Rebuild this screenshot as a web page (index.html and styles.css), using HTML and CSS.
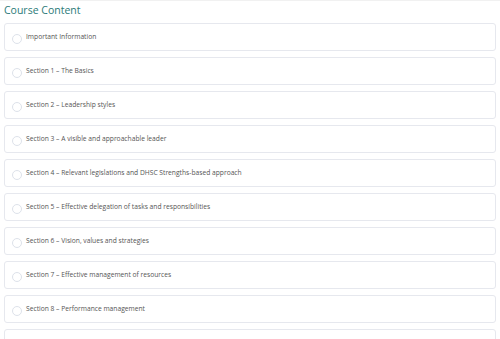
FILE: index.html
```html
<!DOCTYPE html>
<html lang="en">
<head>
    <meta charset="UTF-8">
    <meta name="viewport" content="width=device-width, initial-scale=1.0">
    <title>Course Content</title>
    <link rel="stylesheet" href="styles.css">
</head>
<body>
    <div class="course">
        <h2 class="course-title">Course Content</h2>
        <ul class="lessons">
            <li class="lesson"><span class="check"></span><span class="lesson-name">Important Information</span></li>
            <li class="lesson"><span class="check"></span><span class="lesson-name">Section 1 – The Basics</span></li>
            <li class="lesson"><span class="check"></span><span class="lesson-name">Section 2 – Leadership styles</span></li>
            <li class="lesson"><span class="check"></span><span class="lesson-name">Section 3 – A visible and approachable leader</span></li>
            <li class="lesson"><span class="check"></span><span class="lesson-name">Section 4 – Relevant legislations and DHSC Strengths-based approach</span></li>
            <li class="lesson"><span class="check"></span><span class="lesson-name">Section 5 – Effective delegation of tasks and responsibilities</span></li>
            <li class="lesson"><span class="check"></span><span class="lesson-name">Section 6 – Vision, values and strategies</span></li>
            <li class="lesson"><span class="check"></span><span class="lesson-name">Section 7 – Effective management of resources</span></li>
            <li class="lesson"><span class="check"></span><span class="lesson-name">Section 8 – Performance management</span></li>
            <li class="lesson"><span class="check"></span></li>
        </ul>
    </div>
</body>
</html>
```

FILE: styles.css
```css
body {
    margin: 0;
    padding: 0;
    background-color: #fff;
    font-family: "Open Sans", sans-serif;
    border-top: 1px solid #f1f1f1;
}
.course {
    padding: 0 4px;
}
.course-title {
    margin: 0;
    padding-top: 2px;
    height: 20px;
    line-height: 14px;
    font-size: 10.5px;
    font-weight: 500;
    color: #2b7a78;
}
.lessons {
    list-style: none;
    margin: 0;
    padding: 0;
    display: flex;
    flex-direction: column;
    gap: 6px;
}
.lesson {
    display: flex;
    align-items: center;
    gap: 4px;
    height: 26px;
    padding: 0 7px;
    border: 1px solid #e6e8ee;
    border-radius: 3px;
    background-color: #fff;
}
.check {
    width: 8px;
    height: 8px;
    margin-top: 4px;
    border: 1px solid #dde2ea;
    border-radius: 50%;
    flex-shrink: 0;
}
.lesson-name {
    font-size: 6.7px;
    color: #555;
    margin-top: -2px;
}
```
